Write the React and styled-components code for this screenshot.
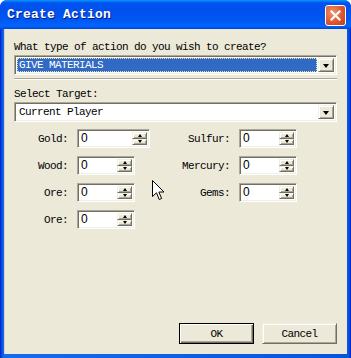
import React from 'react'
import styled, { createGlobalStyle } from 'styled-components'

const GlobalStyle = createGlobalStyle`
  html, body {
    margin: 0;
    padding: 0;
    background: #ffffff;
  }
  * {
    box-sizing: border-box;
  }
`

const leftResources = [
  { name: 'Gold:', width: 73 },
  { name: 'Wood:', width: 58 },
  { name: 'Ore:', width: 58 },
  { name: 'Ore:', width: 58 }
]

const rightResources = [
  { name: 'Sulfur:', width: 58 },
  { name: 'Mercury:', width: 58 },
  { name: 'Gems:', width: 58 }
]

const App = () => (
  <Window>
    <GlobalStyle />
    <TitleBar>
      <Title>Create Action</Title>
      <CloseButton>
        <svg width="11" height="11" viewBox="0 0 11 11">
          <path d="M1.5 1.5 L9.5 9.5 M9.5 1.5 L1.5 9.5" stroke="#fff" strokeWidth="2.2" strokeLinecap="square" />
        </svg>
      </CloseButton>
    </TitleBar>
    <Client>
      <FieldLabel>What type of action do you wish to create?</FieldLabel>
      <Combo>
        <ComboValue $selected>
          <span>GIVE MATERIALS</span>
        </ComboValue>
        <DropButton><DownArrow /></DropButton>
      </Combo>
      <Separator />
      <FieldLabel $top={8}>Select Target:</FieldLabel>
      <Combo>
        <ComboValue>Current Player</ComboValue>
        <DropButton><DownArrow /></DropButton>
      </Combo>
      <SpinGrid>
        <SpinColumn>
          {leftResources.map((r, i) => (
            <SpinRow key={i}>
              <SpinLabel $width={54}>{r.name}</SpinLabel>
              <Spinner $width={r.width}>
                <SpinValue>0</SpinValue>
                <SpinButtons>
                  <SpinButton><UpArrow /></SpinButton>
                  <SpinButton><SmallDown /></SpinButton>
                </SpinButtons>
              </Spinner>
            </SpinRow>
          ))}
        </SpinColumn>
        <SpinColumn>
          {rightResources.map((r, i) => (
            <SpinRow key={i}>
              <SpinLabel $width={67}>{r.name}</SpinLabel>
              <Spinner $width={r.width}>
                <SpinValue>0</SpinValue>
                <SpinButtons>
                  <SpinButton><UpArrow /></SpinButton>
                  <SpinButton><SmallDown /></SpinButton>
                </SpinButtons>
              </Spinner>
            </SpinRow>
          ))}
        </SpinColumn>
      </SpinGrid>
      <Spacer />
      <ButtonRow>
        <DialogButton $default>OK</DialogButton>
        <DialogButton>Cancel</DialogButton>
      </ButtonRow>
    </Client>
    <Cursor width="13" height="21" viewBox="0 0 13 21">
      <path d="M0.5 0.5 L0.5 16.5 L4.5 12.8 L7.2 19.5 L9.6 18.5 L6.9 12 L12 12 Z" fill="#fff" stroke="#000" strokeWidth="1" />
    </Cursor>
  </Window>
)

const font = `"Liberation Mono", "DejaVu Sans Mono", monospace`

const Window = styled.div`
  position: relative;
  width: 351px;
  height: 358px;
  display: flex;
  flex-direction: column;
  border-radius: 7px 7px 0 0;
  overflow: hidden;
  background: linear-gradient(to right, #0019cf 0px, #0855dd 2px, #166aee 4px, #0855dd calc(100% - 2px), #0019cf 100%);
  font-family: ${font};
`

const TitleBar = styled.div`
  height: 29px;
  flex: 0 0 29px;
  display: flex;
  align-items: center;
  justify-content: space-between;
  padding: 0 5px 0 7px;
  background: linear-gradient(to bottom, #0997ff 0px, #0053ee 3px, #0050ee 10px, #0057f0 20px, #0066ff 26px, #0044d8 29px);
`

const Title = styled.div`
  color: #ffffff;
  font-weight: bold;
  font-size: 13px;
  letter-spacing: 0.2px;
  text-shadow: 1px 1px #0a1883;
`

const CloseButton = styled.div`
  width: 21px;
  height: 21px;
  margin-top: 1px;
  border: 1px solid #ffffff;
  border-radius: 3px;
  display: flex;
  align-items: center;
  justify-content: center;
  background: radial-gradient(circle at 35% 35%, #f0936f 0%, #e0582f 55%, #c1391a 100%);
`

const Client = styled.div`
  flex: 1;
  margin: 0 4px 4px;
  background: #ece9d8;
  padding: 12px 10px 10px;
  display: flex;
  flex-direction: column;
  box-shadow: inset 1px 0 #d8d4c4;
`

const FieldLabel = styled.div`
  font-size: 11px;
  letter-spacing: -0.6px;
  line-height: 12px;
  height: 12px;
  margin-top: ${p => p.$top || 0}px;
  margin-bottom: 2px;
  color: #000;
  white-space: nowrap;
`

const sunken = `
  background: #ffffff;
  border-top: 1px solid #aca899;
  border-left: 1px solid #aca899;
  border-right: 1px solid #ffffff;
  border-bottom: 1px solid #ffffff;
  box-shadow: inset 1px 1px #716f64, inset -1px -1px #f1efe2;
`

const raised = `
  background: #ece9d8;
  border-top: 1px solid #f1efe2;
  border-left: 1px solid #f1efe2;
  border-right: 1px solid #716f64;
  border-bottom: 1px solid #716f64;
  box-shadow: inset 1px 1px #ffffff, inset -1px -1px #aca899;
`

const Combo = styled.div`
  ${sunken}
  height: 20px;
  display: flex;
  align-items: stretch;
  padding: 2px;
`

const ComboValue = styled.div`
  flex: 1;
  display: flex;
  align-items: center;
  padding-left: 2px;
  margin-right: 1px;
  font-size: 11px;
  letter-spacing: -0.6px;
  white-space: nowrap;
  color: ${p => (p.$selected ? '#ffffff' : '#000000')};
  background: ${p => (p.$selected ? '#316ac5' : 'transparent')};
  outline: ${p => (p.$selected ? '1px dotted #f0e0a0' : 'none')};
  outline-offset: -1px;
`

const DropButton = styled.div`
  ${raised}
  width: 16px;
  display: flex;
  align-items: center;
  justify-content: center;
`

const DownArrow = styled.span`
  width: 0;
  height: 0;
  border-left: 3.5px solid transparent;
  border-right: 3.5px solid transparent;
  border-top: 4px solid #000;
  margin-top: 1px;
`

const UpArrow = styled.span`
  width: 0;
  height: 0;
  border-left: 2.5px solid transparent;
  border-right: 2.5px solid transparent;
  border-bottom: 3px solid #000;
`

const SmallDown = styled.span`
  width: 0;
  height: 0;
  border-left: 2.5px solid transparent;
  border-right: 2.5px solid transparent;
  border-top: 3px solid #000;
`

const Separator = styled.div`
  margin-top: 3px;
  border-top: 1px solid #aca899;
  border-bottom: 1px solid #ffffff;
`

const SpinGrid = styled.div`
  margin-top: 7px;
  display: flex;
  gap: 13px;
`

const SpinColumn = styled.div`
  display: flex;
  flex-direction: column;
  gap: 8px;
`

const SpinRow = styled.div`
  display: flex;
  align-items: center;
  gap: 9px;
  height: 19px;
`

const SpinLabel = styled.div`
  width: ${p => p.$width}px;
  text-align: right;
  font-size: 11px;
  letter-spacing: -0.6px;
  white-space: nowrap;
  padding-top: 1px;
`

const Spinner = styled.div`
  ${sunken}
  width: ${p => p.$width}px;
  height: 19px;
  display: flex;
  padding: 2px;
`

const SpinValue = styled.div`
  flex: 1;
  font-family: "Liberation Sans", Arial, sans-serif;
  font-size: 12px;
  line-height: 13px;
  padding-left: 1px;
`

const SpinButtons = styled.div`
  width: 15px;
  display: flex;
  flex-direction: column;
`

const SpinButton = styled.div`
  ${raised}
  flex: 1;
  display: flex;
  align-items: center;
  justify-content: center;
`

const Spacer = styled.div`
  flex: 1;
`

const ButtonRow = styled.div`
  display: flex;
  justify-content: flex-end;
  gap: 8px;
`

const DialogButton = styled.div`
  ${raised}
  width: 75px;
  height: 21px;
  display: flex;
  align-items: center;
  justify-content: center;
  font-size: 11px;
  letter-spacing: -0.6px;
  ${p => p.$default && `
    border: 1px solid #000;
    box-shadow: inset 1px 1px #ffffff, inset -1px -1px #716f64, inset -2px -2px #aca899;
  `}
`

const Cursor = styled.svg`
  position: absolute;
  left: 152px;
  top: 180px;
`

export default App
